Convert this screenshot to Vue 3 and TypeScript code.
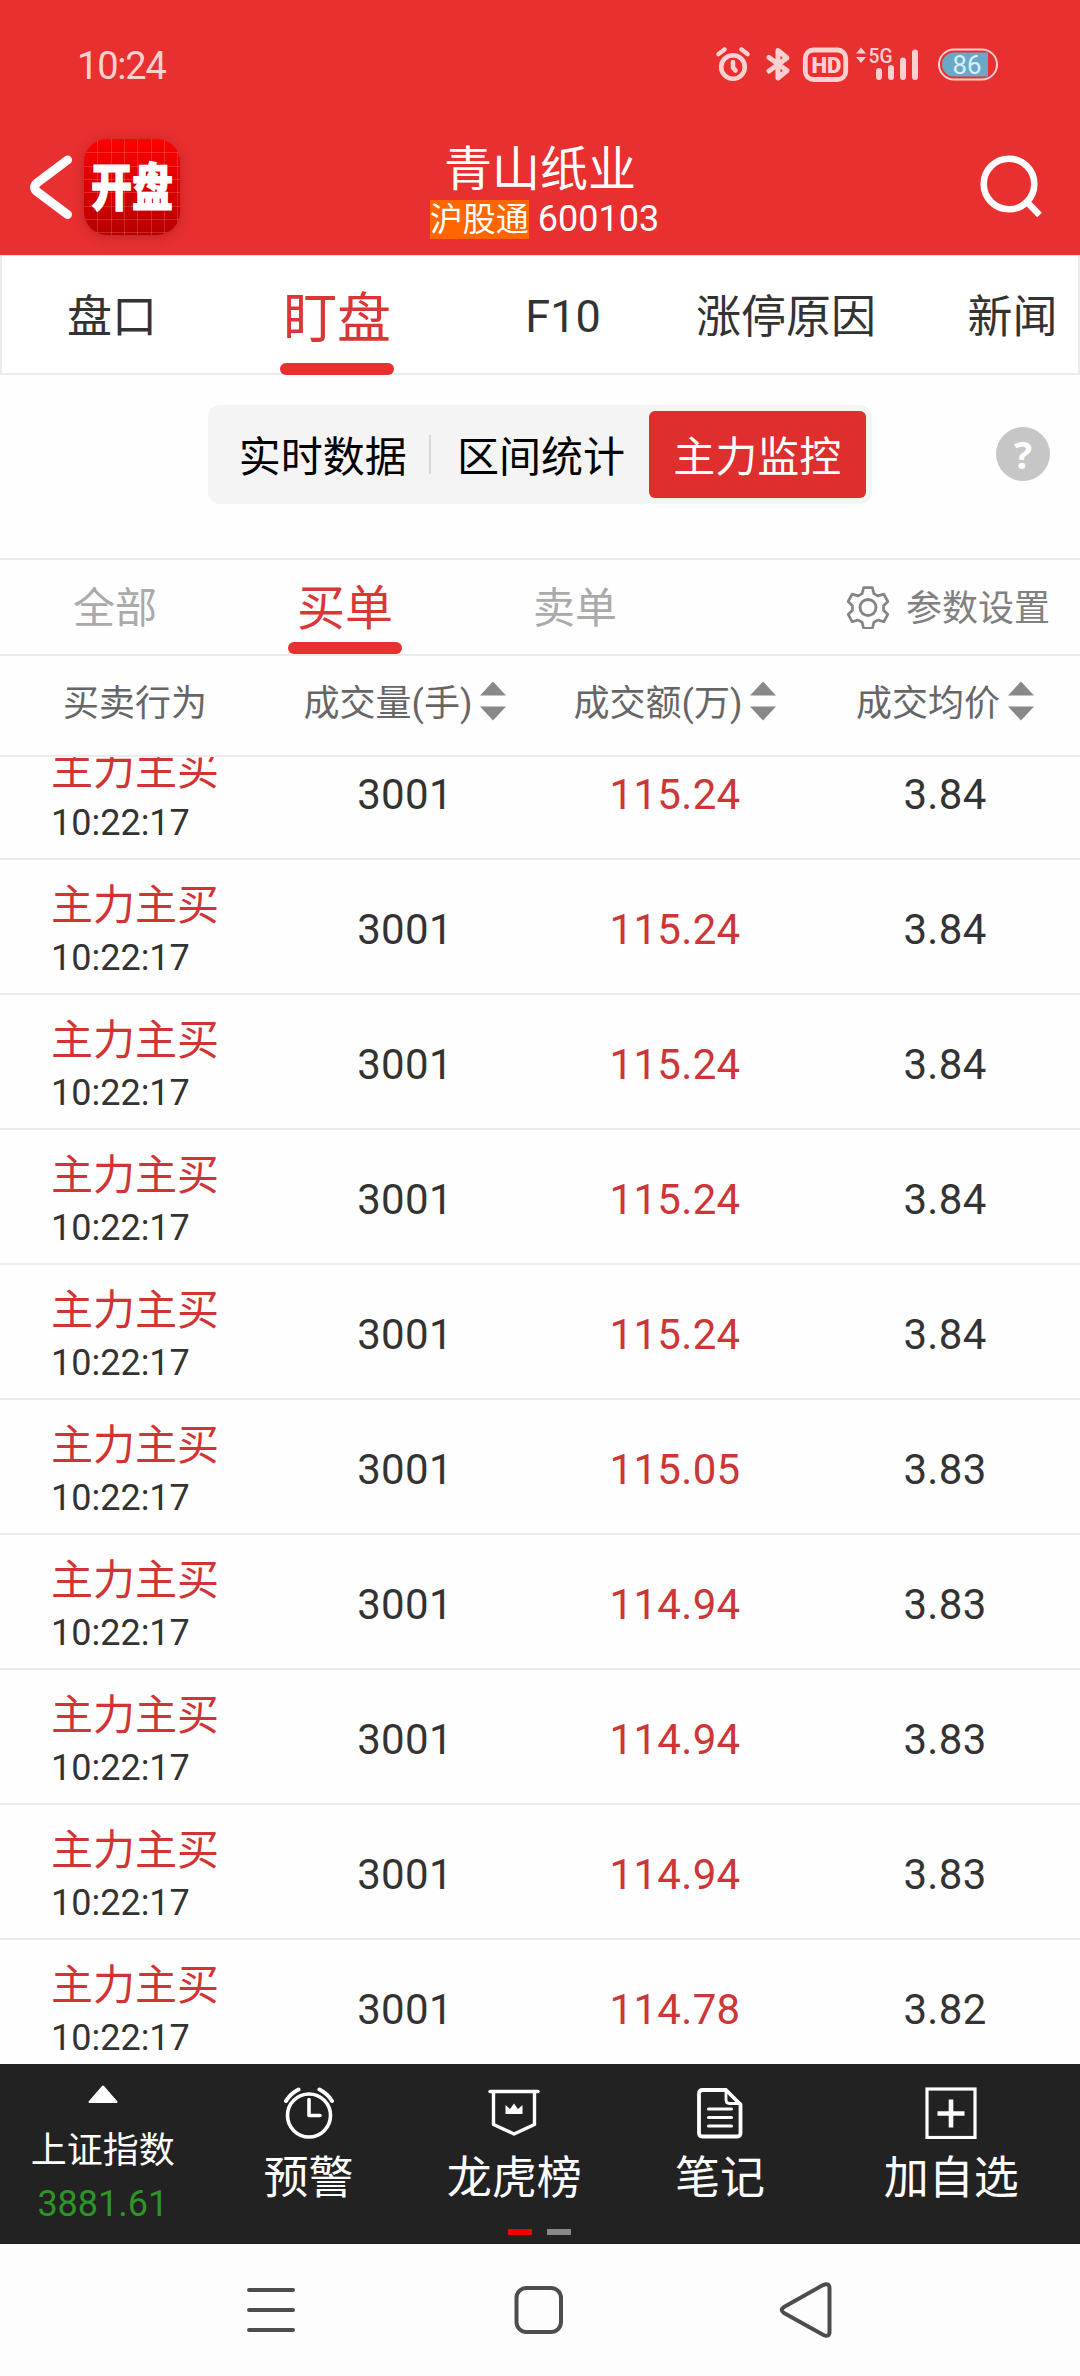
<script setup lang="ts">
interface Trade {
  amount: string
  price: string
}

const tabs: { label: string; width: number }[] = [
  { label: '盘口', width: 220 },
  { label: '盯盘', width: 230 },
  { label: 'F10', width: 222 },
  { label: '涨停原因', width: 224 },
  { label: '新闻', width: 229 },
]
const segments: string[] = ['实时数据', '区间统计', '主力监控']
const filters: string[] = ['全部', '买单', '卖单']
const columns: { label: string; sortable: boolean }[] = [
  { label: '买卖行为', sortable: false },
  { label: '成交量(手)', sortable: true },
  { label: '成交额(万)', sortable: true },
  { label: '成交均价', sortable: true },
]
const trades: Trade[] = [
  { amount: '115.24', price: '3.84' },
  { amount: '115.24', price: '3.84' },
  { amount: '115.24', price: '3.84' },
  { amount: '115.24', price: '3.84' },
  { amount: '115.24', price: '3.84' },
  { amount: '115.05', price: '3.83' },
  { amount: '114.94', price: '3.83' },
  { amount: '114.94', price: '3.83' },
  { amount: '114.94', price: '3.83' },
  { amount: '114.78', price: '3.82' },
]
</script>

<template>
  <div class="screen">
    <header class="top">
      <div class="status">
        <span class="clock">10:24</span>
        <svg class="status-icons" width="290" height="44" viewBox="0 0 290 44" fill="none">
          <g stroke="#ffd0d0" stroke-linecap="round" stroke-linejoin="round">
            <circle cx="23" cy="26" r="11.800" stroke-width="4.600" />
            <path d="M23 21v5.500l2.500 3" stroke-width="4.600" />
            <path d="M8.500 13l6-4.500M31.500 8.500l6 4.500" stroke-width="4.600" />
            <path d="M59 16.500l18 13-9 7.500V9.500l9 7.500-18 13" stroke-width="5" />
            <rect x="95.300" y="9" width="40.400" height="29.500" rx="8" stroke-width="4.800" />
          </g>
          <text x="101.500" y="31.500" class="hd" textLength="30" lengthAdjust="spacingAndGlyphs">HD</text>
          <path d="M146 12.500l5-6 5 6zM146 16l5 6 5-6z" fill="#ffd0d0" />
          <text x="158.500" y="21.500" class="net" textLength="24" lengthAdjust="spacingAndGlyphs">5G</text>
          <path d="M169 30V36M181 27V36M193 19.500V36M205 11.500V36" stroke="#ffd0d0" stroke-width="6" stroke-linecap="round" />
          <rect x="229" y="8.500" width="58" height="30" rx="15" stroke="#ffd0d0" stroke-width="2" />
          <path d="M278 11.500v24H244a12 12 0 0 1 0-24z" fill="#69a8c6" />
          <text x="242.500" y="32.500" class="batt" textLength="29" lengthAdjust="spacingAndGlyphs">86</text>
        </svg>
      </div>
      <div class="titlebar">
        <div class="left">
          <svg width="50" height="76" viewBox="0 0 50 76" fill="none">
            <path d="M42.500 11L12.500 33.500Q6.500 38.300 12.500 43L42.500 65.500" stroke="#fff" stroke-width="9" stroke-linecap="round" stroke-linejoin="round" />
          </svg>
          <div class="logo"><span>开盘</span></div>
        </div>
        <div class="title">
          <div class="name">青山纸业</div>
          <div class="code"><span class="tag">沪股通</span><span>600103</span></div>
        </div>
        <svg class="search" width="70" height="70" viewBox="0 0 70 70" fill="none" stroke="#fff">
          <circle cx="34" cy="34" r="25.300" stroke-width="6.600" />
          <path d="M51.500 51.500L64.500 65" stroke-width="6.500" />
        </svg>
      </div>
    </header>

    <nav class="tabs">
      <div v-for="(t, i) in tabs" :key="t.label" class="tab" :class="{ active: i === 1, latin: i === 2 }" :style="{ width: t.width + 'px' }">{{ t.label }}</div>
    </nav>

    <section class="switcher">
      <div class="segments">
        <div v-for="(s, i) in segments" :key="s" class="segment" :class="{ on: i === 2, split: i === 0 }">{{ s }}</div>
      </div>
      <div class="help">?</div>
    </section>

    <div class="filters">
      <div v-for="(f, i) in filters" :key="f" class="filter" :class="{ active: i === 1 }">{{ f }}</div>
      <div class="settings">
        <svg width="44" height="44" viewBox="0 0 44 44" fill="none" stroke="#858585" stroke-width="2.800" stroke-linejoin="round">
          <path d="M17.500 2h9l1.600 6.200 4 2.300 6.200-1.800 4.200 7.600-4.400 4.400v4.600l4.400 4.400-4.200 7.600-6.200-1.800-4 2.300-1.600 6.200h-9l-1.600-6.200-4-2.300-6.200 1.800-4.200-7.600 4.400-4.400v-4.600l-4.400-4.400 4.200-7.600 6.200 1.800 4-2.300z" transform="translate(.7 .7) scale(.968)" />
          <circle cx="22" cy="22.500" r="8" />
        </svg>
        <span>参数设置</span>
      </div>
    </div>

    <div class="thead">
      <div v-for="c in columns" :key="c.label" class="th">
        <span>{{ c.label }}</span>
        <svg v-if="c.sortable" width="26" height="40" viewBox="0 0 26 40" fill="#888">
          <path d="M0 14.500L13 .5l13 14zM0 25.500l13 14 13-14z" />
        </svg>
      </div>
    </div>

    <main class="list">
      <div class="rows">
        <div v-for="(r, i) in trades" :key="i" class="row">
          <div class="act">
            <div class="kind">主力主买</div>
            <div class="time">10:22:17</div>
          </div>
          <div class="cell">3001</div>
          <div class="cell red">{{ r.amount }}</div>
          <div class="cell">{{ r.price }}</div>
        </div>
      </div>
    </main>

    <footer class="bar">
      <div class="index">
        <svg width="30" height="18" viewBox="0 0 30 18"><path d="M15 1.500L28.500 17h-27z" fill="#fff" stroke="#fff" stroke-width="2" stroke-linejoin="round" /></svg>
        <div class="index-name">上证指数</div>
        <div class="index-value">3881.61</div>
      </div>
      <div class="item">
        <svg width="52" height="52" viewBox="0 0 52 52" fill="none" stroke="#fff" stroke-width="3.600" stroke-linecap="round">
          <circle cx="26" cy="28.500" r="21.500" />
          <path d="M26 12.500v16h11" stroke-linejoin="round" />
          <path d="M3 14Q7.500 6.500 15.500 2.500M49 14Q44.500 6.500 36.500 2.500" stroke-width="4" />
        </svg>
        <span>预警</span>
      </div>
      <div class="item">
        <svg width="52" height="52" viewBox="0 0 52 52" fill="none" stroke="#fff" stroke-width="3.400">
          <path d="M2 4.500h48" stroke-linecap="round" />
          <path d="M5.500 5v32.500l20.500 9.500 20.500-9.500V5" stroke-linejoin="round" />
          <path d="M17.500 18l4.500 4 4-5.500 4 5.500 4.500-4v9h-17z" fill="#fff" stroke="none" />
        </svg>
        <span>龙虎榜</span>
      </div>
      <div class="item">
        <svg width="52" height="52" viewBox="0 0 52 52" fill="none" stroke="#fff" stroke-linecap="round" stroke-linejoin="round">
          <path d="M8.500 3H32l14.500 14.500V46q0 3.500-3.500 3.500H8.500Q5 49.500 5 46V6.500Q5 3 8.500 3z" stroke-width="3.800" />
          <path d="M32 3v10q0 3.500 3.500 3.500H46" stroke-width="2.800" />
          <path d="M14.500 22h23M14.500 30.500h23M14.500 39h23" stroke-width="3" />
        </svg>
        <span>笔记</span>
      </div>
      <div class="item wide">
        <svg width="52" height="52" viewBox="0 0 52 52" fill="none" stroke="#fff">
          <rect x="2" y="2" width="48" height="48.500" stroke-width="3.200" />
          <path d="M26 12.500v28M12.500 26.500h27" stroke-width="4.600" />
        </svg>
        <span>加自选</span>
      </div>
      <div class="pager"><i class="current"></i><i></i></div>
    </footer>

    <div class="sysnav">
      <svg width="52" height="56" viewBox="0 0 52 56" stroke="#4d4d4d" stroke-width="4" stroke-linecap="round"><path d="M4 8h44M4 28h44M4 48h44" /></svg>
      <svg width="52" height="56" viewBox="0 0 52 56" fill="none" stroke="#4d4d4d" stroke-width="4"><rect x="4.500" y="6" width="44.500" height="44" rx="10" /></svg>
      <svg width="54" height="56" viewBox="0 0 54 56" fill="none" stroke="#4d4d4d" stroke-width="4"><path d="M4.500 24.700L43.500 2.800Q50 0 50 6v43.500Q50 55.500 43.500 52.500L4.500 30.800Q0 27.800 4.500 24.700z" transform="translate(1.500 .3)" /></svg>
    </div>
  </div>
</template>

<style>
body {
  margin: 0;
}
</style>

<style scoped>
.screen {
  width: 1080px;
  height: 2376px;
  display: flex;
  flex-direction: column;
  overflow: hidden;
  background: #fefefe;
  color: #333;
  font-family: Roboto, 'Noto Sans CJK SC', sans-serif;
}
svg {
  display: block;
  flex: none;
}
.top {
  height: 255px;
  background: #e83030;
  color: #fff;
  flex: none;
}
.status {
  height: 120px;
  display: flex;
  align-items: flex-start;
  justify-content: space-between;
  padding: 0 80px 0 77px;
  box-sizing: border-box;
}
.clock {
  margin-top: 44px;
  font-size: 38px;
  line-height: 44px;
  color: #ffd0d0;
  letter-spacing: -1.2px;
}
.status-icons {
  margin-top: 41px;
  font-family: Roboto, sans-serif;
}
.hd {
  font-size: 22px;
  font-weight: 900;
  fill: #ffd0d0;
}
.net {
  font-size: 21px;
  font-weight: 500;
  fill: #ffd0d0;
}
.batt {
  font-size: 25px;
  fill: #d8efff;
}
.titlebar {
  height: 135px;
  display: grid;
  grid-template-columns: 360px 366px 1fr;
}
.left {
  display: flex;
  align-items: flex-start;
  padding: 19px 0 0 25px;
}
.left svg {
  margin: 10px 9px 0 0;
}
.logo {
  width: 96px;
  height: 96px;
  border-radius: 23px;
  display: flex;
  align-items: center;
  justify-content: center;
  background:
    repeating-linear-gradient(90deg, transparent 0 12.350px, rgba(255, 255, 255, 0.16) 12.350px 13.350px) 1px 0,
    repeating-linear-gradient(180deg, transparent 0 12.350px, rgba(255, 255, 255, 0.16) 12.350px 13.350px) 1px 1px,
    linear-gradient(#ff0000, #b60000);
  box-shadow: 0 2px 12px rgba(130, 20, 20, 0.4);
}
.logo span {
  margin-top: 3px;
  font-size: 41px;
  line-height: 60px;
  font-weight: 900;
  -webkit-text-stroke: 1px #fff;
  transform: scaleY(1.24);
}
.title {
  display: flex;
  flex-direction: column;
  align-items: center;
}
.name {
  margin-top: 21px;
  margin-right: 6px;
  font-size: 48px;
  line-height: 58px;
}
.code {
  display: flex;
  align-items: center;
  gap: 9px;
  margin-top: -1px;
  padding-left: 3px;
  font-size: 36px;
  line-height: 42px;
}
.tag {
  height: 39px;
  line-height: 40px;
  font-size: 33px;
  background: #ff6600;
}
.search {
  margin: 30px 0 0 249px;
}
.tabs {
  flex: none;
  height: 120px;
  box-sizing: border-box;
  display: flex;
  background: #fff;
  border: 2px solid #ebebeb;
  border-top: 1px solid #fbdada;
}
.tab {
  flex: none;
  height: 119px;
  line-height: 124px;
  text-align: center;
  font-size: 45px;
}
.tab.latin {
  line-height: 121px;
}
.tab.active,
.filter.active {
  position: relative;
  color: #d93636;
}
.tab.active {
  font-size: 54px;
  line-height: 128px;
}
.tab.active::after,
.filter.active::after {
  content: '';
  position: absolute;
  left: 58px;
  bottom: 0;
  width: 114px;
  height: 12px;
  border-radius: 6px;
  background: #e83030;
}
.switcher {
  flex: none;
  height: 183px;
  display: flex;
  align-items: flex-start;
  padding: 30px 30px 0 208px;
  box-sizing: border-box;
}
.segments {
  width: 664px;
  height: 99px;
  box-sizing: border-box;
  padding: 6px;
  border-radius: 12px;
  display: flex;
  background: #f4f4f4;
}
.segment {
  flex: 1;
  text-align: center;
  font-size: 42px;
  line-height: 94px;
  height: 87px;
  color: #000;
}
.segment:nth-child(2) {
  text-indent: 2px;
}
.segment.split {
  background: linear-gradient(#d8d8d8, #d8d8d8) right center / 2px 39px no-repeat;
}
.segment.on {
  color: #fff;
  background: #df2e2e;
  border-radius: 6px;
}
.help {
  width: 54px;
  height: 54px;
  margin: 22px 0 0 auto;
  border-radius: 50%;
  background: #c6c6c6;
  color: #fff;
  text-align: center;
  font: 700 38px/55px 'Open Sans', sans-serif;
}
.filters {
  flex: none;
  height: 98px;
  box-sizing: border-box;
  display: flex;
  border-top: 2px solid #ebebeb;
  border-bottom: 2px solid #ebebeb;
}
.filter {
  width: 230px;
  line-height: 97px;
  text-align: center;
  font-size: 42px;
  color: #aaa;
}
.filter.active {
  font-size: 48px;
}
.settings {
  margin-left: auto;
  margin-right: 30px;
  display: flex;
  align-items: center;
  gap: 16px;
  font-size: 36px;
  color: #808080;
}
.settings span {
  padding-top: 3px;
  line-height: 44px;
}
.thead {
  flex: none;
  height: 101px;
  box-sizing: border-box;
  border-bottom: 2px solid #ebebeb;
  display: flex;
  padding-bottom: 10px;
}
.th {
  width: 270px;
  display: flex;
  align-items: center;
  justify-content: center;
  gap: 8px;
  font-size: 36px;
  color: #666;
}
.th span {
  margin-top: -2px;
}
.list {
  height: 1307px;
  flex: none;
  overflow: hidden;
}
.rows {
  margin-top: -32px;
}
.row {
  height: 135px;
  box-sizing: border-box;
  border-bottom: 2px solid #ebebeb;
  display: flex;
}
.act {
  width: 219px;
  padding-left: 51px;
  box-sizing: border-box;
}
.act + .cell {
  margin-left: 51px;
}
.kind {
  margin-top: 21px;
  font-size: 42px;
  line-height: 50px;
  color: #d03434;
}
.time {
  margin-top: 5px;
  font-size: 36px;
  line-height: 44px;
}
.cell {
  width: 270px;
  line-height: 139px;
  text-align: center;
  font-size: 42px;
  letter-spacing: 0.3px;
}
.red {
  color: #cc3636;
}
.bar {
  position: relative;
  flex: none;
  height: 180px;
  background: #222;
  color: #fff;
  display: flex;
}
.index,
.item {
  width: 205.700px;
  display: flex;
  flex-direction: column;
  align-items: center;
}
.index svg {
  margin-top: 21px;
}
.index-name {
  margin-top: 24px;
  font-size: 36px;
  line-height: 48px;
}
.index-value {
  margin-top: 7px;
  font-size: 36px;
  line-height: 44px;
  color: #2f9428;
}
.item svg {
  margin-top: 23px;
}
.item span {
  margin-top: 12px;
  font-size: 45px;
  line-height: 56px;
}
.wide {
  flex: 1;
}
.pager {
  position: absolute;
  left: 508px;
  bottom: 9px;
  display: flex;
  gap: 15px;
}
.pager i {
  width: 24px;
  height: 6px;
  background: #888;
}
.pager .current {
  background: #f00000;
}
.sysnav {
  flex: 1;
  background: #fdfdfd;
  display: flex;
  align-items: center;
  justify-content: space-between;
  padding: 0 248px 0 245px;
}
</style>
